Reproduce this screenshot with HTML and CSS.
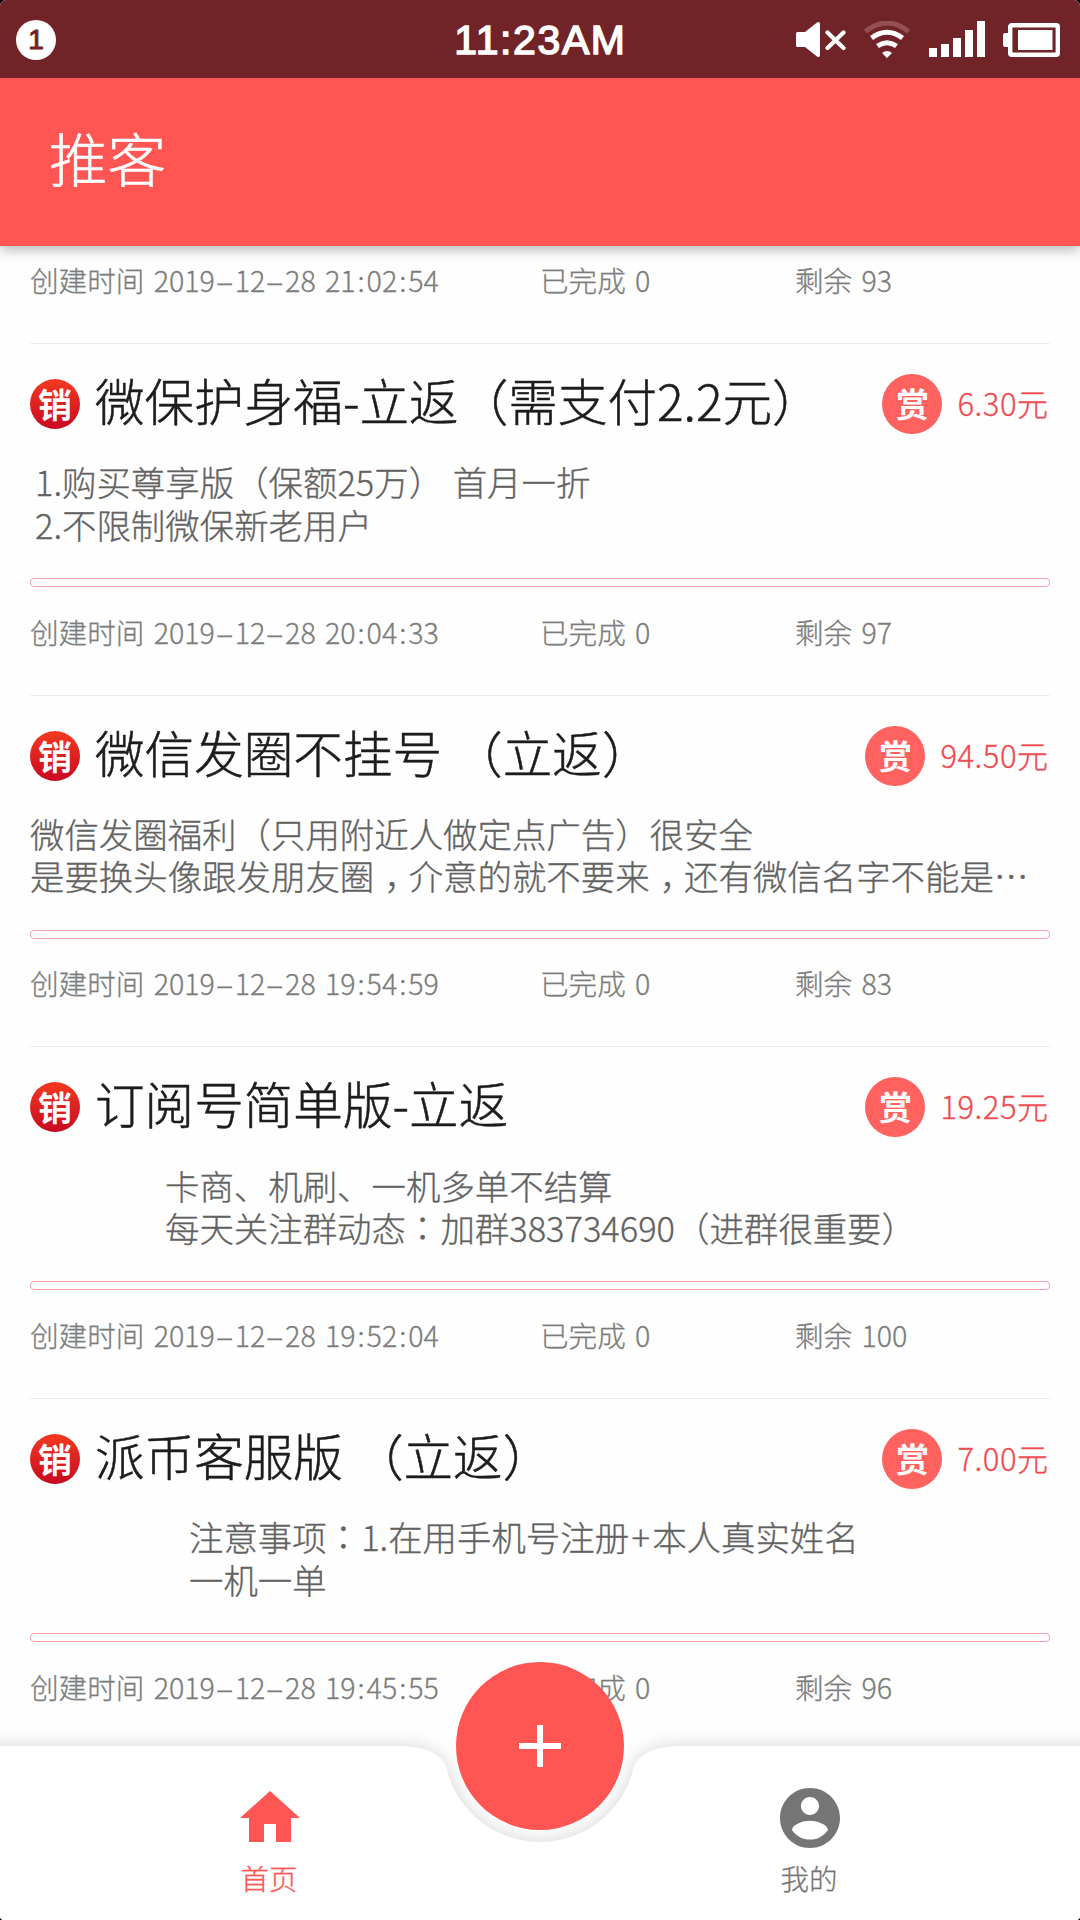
FILE: index.html
```html
<!DOCTYPE html>
<html lang="zh-CN">
<head>
<meta charset="utf-8">
<title>推客</title>
<link rel="stylesheet" href="styles.css">
</head>
<body>
<div class="screen">
  <div class="status">
    <div class="notice">1</div>
    <div class="clock">11:23AM</div>
    <div class="indicators">
      <svg width="50" height="38" viewBox="0 0 50 38" fill="#fff"><path d="M0 12.500a1.500 1.500 0 0 1 1.500-1.500H9L21 1.500Q24 0 24 3V34q0 3-3 1.500L9 26H1.500A1.500 1.500 0 0 1 0 24.500z"/><path d="M31.500 11.500 47.500 27M47.500 11.500 31.500 27" stroke="#fff" stroke-width="4.200" stroke-linecap="round"/></svg>
      <svg class="wifi" width="46" height="38" viewBox="0 0 46 38" fill="none" stroke="#fff" stroke-width="5"><path d="M1.500 10.500Q23-6.500 44.500 10.500" stroke="#935052"/><path d="M7.500 17Q23 5.500 38.500 17"/><path d="M13.500 25Q23 18.500 32.500 25"/><path d="M18 32q5-4 10 0l-5 5z" fill="#fff" stroke="none"/></svg>
      <svg class="signal" width="56" height="38" viewBox="0 0 56 38" fill="#fff"><rect y="27" width="8" height="9"/><rect x="12" y="23" width="8" height="13"/><rect x="24" y="17" width="8" height="19"/><rect x="36" y="9" width="8" height="27"/><rect x="48" width="8" height="36"/></svg>
      <svg class="battery" width="57" height="38" viewBox="0 0 57 38" fill="#fff"><path d="M0 14q0-2 2-2h3v14H2q-2 0-2-2z"/><rect x="7.200" y="4.200" width="47.600" height="29.600" rx="1.500" fill="none" stroke="#fff" stroke-width="4.400"/><rect x="15" y="9" width="34.500" height="20"/></svg>
    </div>
  </div>
  <header class="appbar"><h1>推客</h1></header>
  <main class="list">
    <div class="meta"><span>创建时间 2019<i>-</i>12<i>-</i>28 21<b>:</b>02<b>:</b>54</span><span>已完成 0</span><span>剩余 93</span></div>
    <article class="card">
      <div class="head"><span class="logo">销</span><h2>微保护身福-立返（需支付2.2元）</h2><span class="reward">赏</span><span class="price">6.30元</span></div>
      <p class="desc indent-0">1.购买尊享版（保额25万） 首月一折<br>2.不限制微保新老用户</p>
      <div class="bar"></div>
      <div class="meta"><span>创建时间 2019<i>-</i>12<i>-</i>28 20<b>:</b>04<b>:</b>33</span><span>已完成 0</span><span>剩余 97</span></div>
    </article>
    <article class="card">
      <div class="head"><span class="logo">销</span><h2>微信发圈不挂号 （立返）</h2><span class="reward">赏</span><span class="price">94.50元</span></div>
      <p class="desc">微信发圈福利（只用附近人做定点广告）很安全<br>是要换头像跟发朋友圈<em class="comma">，</em>介意的就不要来<em class="comma">，</em>还有微信名字不能是⋯</p>
      <div class="bar"></div>
      <div class="meta"><span>创建时间 2019<i>-</i>12<i>-</i>28 19<b>:</b>54<b>:</b>59</span><span>已完成 0</span><span>剩余 83</span></div>
    </article>
    <article class="card">
      <div class="head"><span class="logo">销</span><h2>订阅号简单版-立返</h2><span class="reward">赏</span><span class="price">19.25元</span></div>
      <p class="desc indent-1">卡商、机刷、一机多单不结算<br>每天关注群动态<em class="colon">：</em>加群383734690（进群很重要）</p>
      <div class="bar"></div>
      <div class="meta"><span>创建时间 2019<i>-</i>12<i>-</i>28 19<b>:</b>52<b>:</b>04</span><span>已完成 0</span><span>剩余 100</span></div>
    </article>
    <article class="card">
      <div class="head"><span class="logo">销</span><h2>派币客服版 （立返）</h2><span class="reward">赏</span><span class="price">7.00元</span></div>
      <p class="desc indent-2">注意事项<em class="colon">：</em>1.在用手机号注册<em class="plus">+</em>本人真实姓名<br>一机一单</p>
      <div class="bar"></div>
      <div class="meta"><span>创建时间 2019<i>-</i>12<i>-</i>28 19<b>:</b>45<b>:</b>55</span><span>已完成 0</span><span>剩余 96</span></div>
    </article>
  </main>
  <nav class="nav">
    <svg class="nav-bg" width="1080" height="174" viewBox="0 0 1080 174"><path fill="#fff" d="M-40 0H396Q441 0 446.900 23.450A96 96 0 0 0 633.100 23.450Q639 0 684 0H1120V214H-40z"/></svg>
    <a class="tab active"><svg width="72" height="72" viewBox="0 0 24 24" fill="currentColor"><path d="M10 20v-6h4v6h5v-8h3L12 3 2 12h3v8z"/></svg><span>首页</span></a>
    <a class="tab"><svg width="72" height="72" viewBox="0 0 24 24" fill="currentColor"><path d="M12 2C6.480 2 2 6.480 2 12s4.480 10 10 10 10-4.480 10-10S17.520 2 12 2zm0 3c1.660 0 3 1.340 3 3s-1.340 3-3 3-3-1.340-3-3 1.340-3 3-3zm0 14.200c-2.500 0-4.710-1.280-6-3.220.030-1.990 4-3.080 6-3.080 1.990 0 5.970 1.090 6 3.080-1.290 1.940-3.500 3.220-6 3.220z"/></svg><span>我的</span></a>
    <div class="fab"><svg width="72" height="72" viewBox="0 0 24 24" fill="#fff"><path d="M19 13h-6v6h-2v-6H5v-2h6V5h2v6h6z"/></svg></div>
  </nav>
</div>
</body>
</html>
```
FILE: styles.css
```css
* { box-sizing: border-box; margin: 0; padding: 0; }

body {
  width: 1080px;
  height: 1920px;
  overflow: hidden;
  background: #000;
  font-family: "Noto Sans CJK SC", sans-serif;
  font-weight: 300;
  -webkit-text-stroke: .3px currentColor;
}

i, b, em { font-style: normal; font-weight: inherit; display: inline-block; text-align: center; }

.screen {
  position: relative;
  display: flex;
  flex-direction: column;
  width: 1080px;
  height: 1920px;
  overflow: hidden;
  background: #fefefe;
  border-radius: 6px 6px 4px 4px;
}

/* status bar */
.status {
  flex: none;
  z-index: 2;
  display: grid;
  grid-template-columns: 1fr auto 1fr;
  align-items: center;
  height: 78px;
  padding: 0 20px 0 16px;
  background: #702427;
  color: #fff;
}
.notice {
  width: 40px;
  height: 40px;
  border-radius: 50%;
  background: #fff;
  color: #702427;
  font: 28px/40px "Liberation Sans", sans-serif;
  text-align: center;
  -webkit-text-stroke: 1px #702427;
}
.clock {
  font: 41px/78px "Liberation Sans", sans-serif;
  padding: 1px 0 0 5px;
  letter-spacing: 1.600px;
  -webkit-text-stroke: 1.500px #fff;
}
.indicators { display: flex; justify-content: flex-end; }
.wifi { margin-left: 18px; }
.signal { margin-left: 19px; }
.battery { margin-left: 18px; }

/* title bar */
.appbar {
  flex: none;
  z-index: 1;
  display: flex;
  align-items: center;
  height: 168px;
  padding: 0 49px;
  background: #ff5553;
  color: #fff;
  box-shadow: 0 4px 12px rgba(0, 0, 0, .28);
}
.appbar h1 { font-size: 58.500px; font-weight: 300; line-height: 80px; padding-bottom: 10px; -webkit-text-stroke-width: .5px; }

/* task list */
.list { flex: 1; min-height: 0; margin-top: -10.700px; padding: 0 30px; }
.card { height: 351.670px; border-top: 1px solid #ececec; }
.head { display: flex; align-items: center; height: 120px; }
.logo {
  width: 50px;
  height: 50px;
  border-radius: 50%;
  background: linear-gradient(#f23a20, #c80a22);
  color: #fff;
  font-size: 34px;
  font-weight: 700;
  line-height: 49px;
  text-align: center;
  -webkit-text-stroke-width: 0;
}
.head h2 {
  flex: 1;
  margin-left: 15px;
  padding-bottom: 10px;
  font-size: 49.600px;
  font-weight: 300;
  line-height: 60px;
  white-space: nowrap;
  color: #1c1c1c;
  -webkit-text-stroke-width: .5px;
}
.reward {
  width: 60px;
  height: 60px;
  border-radius: 50%;
  background: #ff625f;
  color: #fff;
  font-size: 33px;
  font-weight: 700;
  line-height: 59px;
  text-align: center;
  -webkit-text-stroke-width: 0;
}
.price { margin: 0 1.500px 0 15px; padding-bottom: 2px; font-size: 31px; line-height: 40px; letter-spacing: .500px; color: #f04b50; }
.desc {
  height: 117.500px;
  margin-top: -3.500px;
  font-size: 34.430px;
  line-height: 42.300px;
  white-space: nowrap;
  color: #626262;
  word-spacing: 2px;
}
.indent-0 { padding-left: 5px; }
.indent-1 { padding-left: 135px; }
.indent-2 { padding-left: 159px; }
.comma { transform: translateX(10px); }
.colon { transform: translate(8px, -3px); }
.plus { width: 23px; }
.bar { height: 9px; border: 1px solid #f3a3ae; border-radius: 4px; }
.meta {
  display: grid;
  grid-template-columns: 510px 255px 1fr;
  height: 107.670px;
  padding-top: 24.700px;
  font-size: 28.600px;
  line-height: 40px;
  word-spacing: 3px;
  color: #7c7c7c;
}
.meta i { width: 19.800px; transform: scaleX(2); }
.meta b { width: 11px; }

/* bottom navigation */
.nav {
  position: absolute;
  inset: auto 0 0;
  z-index: 2;
  display: flex;
  height: 174px;
}
.nav-bg { position: absolute; inset: 0; overflow: visible; filter: drop-shadow(0 0 9px rgba(0, 0, 0, .16)); }
.tab {
  position: relative;
  flex: 1;
  display: flex;
  flex-direction: column;
  align-items: center;
  padding-top: 36px;
  font-size: 28.500px;
  line-height: 40px;
  color: #757575;
}
.tab span { margin: 4px 2px 0 0; }
.tab.active { color: #ff5553; }
.fab {
  position: absolute;
  left: 456px;
  top: -84px;
  display: grid;
  place-items: center;
  width: 168px;
  height: 168px;
  border-radius: 50%;
  background: #ff5553;
}
```
